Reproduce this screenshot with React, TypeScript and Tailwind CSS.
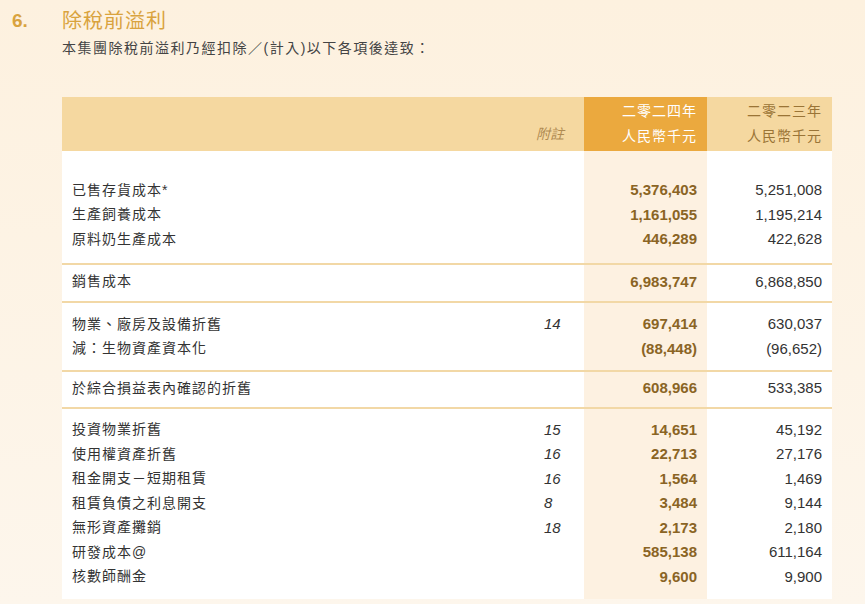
const F = { fontFamily: '"Liberation Sans", "Noto Sans CJK TC", sans-serif' };

type Row = [string, string, string, string];
const groups: Row[][] = [
  [
    ["已售存貨成本*", "", "5,376,403", "5,251,008"],
    ["生產飼養成本", "", "1,161,055", "1,195,214"],
    ["原料奶生產成本", "", "446,289", "422,628"],
  ],
  [["銷售成本", "", "6,983,747", "6,868,850"]],
  [
    ["物業、廠房及設備折舊", "14", "697,414", "630,037"],
    ["減：生物資產資本化", "", "(88,448)", "(96,652)"],
  ],
  [["於綜合損益表內確認的折舊", "", "608,966", "533,385"]],
  [
    ["投資物業折舊", "15", "14,651", "45,192"],
    ["使用權資產折舊", "16", "22,713", "27,176"],
    ["租金開支－短期租賃", "16", "1,564", "1,469"],
    ["租賃負債之利息開支", "8", "3,484", "9,144"],
    ["無形資產攤銷", "18", "2,173", "2,180"],
    ["研發成本@", "", "585,138", "611,164"],
    ["核數師酬金", "", "9,600", "9,900"],
  ],
];
const pads = ["pt-[27px] pb-[11px]", "pt-[5px] pb-[7px]", "pt-[9px] pb-[9px]", "pt-[4px] pb-[6px]", "pt-[9px] pb-[10px]"];

export default function App() {
  return (
    <div className="w-[865px] h-[604px] overflow-hidden bg-gradient-to-b from-[#fdf1df] to-[#fdf6ec]" style={F}>
      <div className="flex items-center pt-[6px] h-[36px]">
        <span className="w-[62px] pl-[12px] text-[19px] font-bold text-[#d9a33e]">6.</span>
        <span className="text-[20px] text-[#d9a33e] tracking-[1px]">除稅前溢利</span>
      </div>
      <div className="pl-[62px] text-[14px] text-[#444] tracking-[1.5px] mt-[2px]">本集團除稅前溢利乃經扣除／(計入)以下各項後達致：</div>
      <div className="ml-[62px] mt-[38px] w-[770px] bg-white text-[14px] text-[#333]">
        <div className="flex h-[54px] bg-[#f5d8a0]">
          <div className="flex-1 flex items-end justify-end pb-[6px] pr-[20px] text-[#b08b52] italic">附註</div>
          <div className="w-[123px] bg-[#eba93e] text-white flex flex-col items-end justify-center pr-[10px] leading-[25px] tracking-[1px]">
            <span>二零二四年</span><span>人民幣千元</span>
          </div>
          <div className="w-[125px] text-[#9a7436] flex flex-col items-end justify-center pr-[10px] leading-[25px] tracking-[1px]">
            <span>二零二三年</span><span>人民幣千元</span>
          </div>
        </div>
        {groups.map((g, gi) => (
          <div key={gi} className={`flex ${gi > 0 ? "border-t-[2px] border-[#f2d8a6]" : ""}`}>
            <div className={`flex-1 ${pads[gi]}`}>
              {g.map((r, i) => (
                <div key={i} className="flex h-[24.5px] items-center">
                  <span className="flex-1 pl-[10px] tracking-[1px]">{r[0]}</span>
                  <span className="w-[40px] italic text-[15px] text-[#333]">{r[1]}</span>
                </div>
              ))}
            </div>
            <div className={`w-[123px] bg-[#fdf1e1] ${pads[gi]}`}>
              {g.map((r, i) => (
                <div key={i} className="h-[24.5px] flex items-center justify-end pr-[10px] text-[15px] font-bold text-[#8a6424]">{r[2]}</div>
              ))}
            </div>
            <div className={`w-[125px] ${pads[gi]}`}>
              {g.map((r, i) => (
                <div key={i} className="h-[24.5px] flex items-center justify-end pr-[10px] text-[15px]">{r[3]}</div>
              ))}
            </div>
          </div>
        ))}
      </div>
    </div>
  );
}
